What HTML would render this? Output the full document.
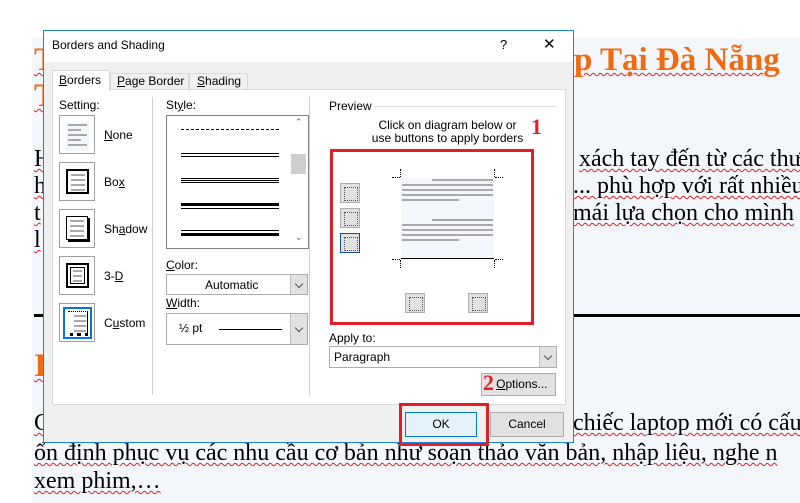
<!DOCTYPE html>
<html><head><meta charset="utf-8"><style>
*{margin:0;padding:0;box-sizing:border-box}
body{width:800px;height:503px;overflow:hidden;background:#fff;position:relative;font-family:"Segoe UI","Liberation Sans","DejaVu Sans",sans-serif}
.a{position:absolute}
.doc{left:32px;top:38px;width:768px;height:465px;background:#f3f6fb}
.t{position:absolute;font-family:"Liberation Serif",serif;font-size:24px;line-height:27px;color:#000;white-space:nowrap;text-decoration:underline wavy #e02020;text-decoration-thickness:1px;text-underline-offset:2px}
.o{color:#f26a10;font-weight:bold;font-size:33px;line-height:36px}
.s{font-size:12px;color:#000;white-space:nowrap}
.box{position:absolute;border:1px solid #a0a0a0;background:#fff}
.lines{position:absolute}
.lines i{display:block;height:2px;background:#a9a9a9;margin-bottom:3px}
.btn{position:absolute;background:#e1e1e1;border:1px solid #adadad;font-size:12px;text-align:center}
.sq{position:absolute;width:20px;height:20px;background:#e1e1e1;border:1px solid #adadad}
.sq:after{content:"";position:absolute;left:3px;top:3px;width:12px;height:12px;border:1px dotted #555}
.dd{position:absolute;right:0;top:0;bottom:0;width:17px;background:#e1e1e1;border-left:1px solid #c0c0c0}
.dd:after{content:"";position:absolute;left:5px;top:50%;margin-top:-4px;width:5px;height:5px;border-right:1px solid #555;border-bottom:1px solid #555;transform:rotate(45deg)}
</style></head><body>
<div class="a doc"></div>
<div class="t o" style="left:34px;top:42px">T</div>
<div class="t o" style="left:574px;top:42px">p Tại Đà Nẵng</div>
<div class="t o" style="left:34px;top:78px">T</div>
<div class="t" style="left:34px;top:146px">H</div>
<div class="t" style="left:34px;top:173px">h</div>
<div class="t" style="left:34px;top:200px">t</div>
<div class="t" style="left:34px;top:227px">l</div>
<div class="t" style="left:579px;top:146px">xách tay đến từ các thư</div>
<div class="t" style="left:573px;top:173px">... phù hợp với rất nhiều</div>
<div class="t" style="left:573px;top:200px">mái lựa chọn cho mình</div>
<div class="a" style="left:34px;top:314px;width:766px;height:3px;background:#000"></div>
<div class="t o" style="left:34px;top:348px">I</div>
<div class="t" style="left:34px;top:410px">C</div>
<div class="t" style="left:573px;top:410px">chiếc laptop mới có cấu</div>
<div class="t" style="left:34px;top:440px">ổn định phục vụ các nhu cầu cơ bản như soạn thảo văn bản, nhập liệu, nghe n</div>
<div class="t" style="left:34px;top:468px">xem phim,…</div>

<!-- dialog -->
<div class="a" style="left:43px;top:30px;width:531px;height:413px;background:#f0f0f0;border:1px solid #1883d7"></div>
<div class="a" style="left:44px;top:31px;width:529px;height:31px;background:#fff"></div>
<div class="a s" style="left:52px;top:38px">Borders and Shading</div>
<div class="a s" style="left:500px;top:37px;font-size:13px">?</div>
<div class="a s" style="left:543px;top:35px;font-size:15px">✕</div>
<div class="a" style="left:52px;top:89px;width:514px;height:316px;background:#fff;border:1px solid #d9d9d9"></div>
<div class="a" style="left:52px;top:70px;width:58px;height:21px;background:#fff;border:1px solid #d9d9d9;border-bottom:none"></div>
<div class="a s" style="left:59px;top:73px"><u>B</u>orders</div>
<div class="a" style="left:110px;top:73px;width:79px;height:17px;border:1px solid #d9d9d9;border-bottom:none"></div>
<div class="a s" style="left:117px;top:74px"><u>P</u>age Border</div>
<div class="a" style="left:189px;top:73px;width:59px;height:17px;border:1px solid #d9d9d9;border-bottom:none"></div>
<div class="a s" style="left:197px;top:74px"><u>S</u>hading</div>

<div class="a s" style="left:59px;top:98px">Setting:</div>
<div class="box" style="left:59px;top:115px;width:36px;height:39px"><div class="lines" style="left:6px;top:6px;width:23px;background:#f3f6fb;padding:2px"><i></i><i style="width:70%"></i><i></i><i style="width:70%"></i><i></i></div></div>
<div class="box" style="left:59px;top:162px;width:36px;height:39px"><div class="a" style="left:6px;top:6px;width:23px;height:25px;border:2px solid #000;padding:3px"><div class="lines" style="left:3px;top:3px;width:14px"><i></i><i></i><i></i><i></i></div></div></div>
<div class="box" style="left:59px;top:209px;width:36px;height:39px"><div class="a" style="left:6px;top:6px;width:22px;height:24px;border:1px solid #000;box-shadow:2px 2px 0 #000"><div class="lines" style="left:3px;top:3px;width:14px"><i></i><i></i><i></i><i></i></div></div></div>
<div class="box" style="left:59px;top:256px;width:36px;height:39px"><div class="a" style="left:6px;top:6px;width:23px;height:25px;border:2px solid #000"><div class="a" style="left:2px;top:2px;width:15px;height:17px;border:1px solid #000"><div class="lines" style="left:2px;top:2px;width:9px"><i></i><i></i><i></i></div></div></div></div>
<div class="box" style="left:59px;top:303px;width:36px;height:39px"><div class="a" style="left:3px;top:3px;width:29px;height:32px;border:2px solid #0a74d7"><div class="a" style="left:3px;top:2px;width:20px;height:22px;border-right:1px solid #000;border-top:1px dotted #000"><div class="lines" style="left:6px;top:3px;width:12px"><i></i><i></i><i></i><i></i></div></div><div class="a" style="left:5px;top:24px;width:18px;height:3px;border-left:3px solid #000;border-right:3px solid #000"><div class="a" style="left:4px;width:4px;height:3px;background:#000"></div></div></div></div>
<div class="a s" style="left:104px;top:128px"><u>N</u>one</div>
<div class="a s" style="left:104px;top:175px">Bo<u>x</u></div>
<div class="a s" style="left:104px;top:222px">Sh<u>a</u>dow</div>
<div class="a s" style="left:104px;top:269px">3-<u>D</u></div>
<div class="a s" style="left:104px;top:316px">C<u>u</u>stom</div>

<div class="a" style="left:152px;top:97px;width:1px;height:298px;background:#d0d0d0"></div>
<div class="a" style="left:309px;top:97px;width:1px;height:298px;background:#d0d0d0"></div>

<div class="a s" style="left:166px;top:98px">St<u>y</u>le:</div>
<div class="box" style="left:166px;top:115px;width:143px;height:134px;border-color:#828282"></div>
<div class="a" style="left:181px;top:129px;width:98px;border-top:1px dashed #000"></div>
<div class="a" style="left:181px;top:153px;width:98px;height:4px;border-top:1px solid #000;border-bottom:1px solid #000"></div>
<div class="a" style="left:181px;top:178px;width:98px;height:5px;border-top:1px solid #000;border-bottom:1px solid #000"><div style="height:1px;margin-top:1px;background:#000"></div></div>
<div class="a" style="left:181px;top:203px;width:98px;height:6px;border-top:3px solid #000;border-bottom:1px solid #000"></div>
<div class="a" style="left:181px;top:230px;width:98px;height:6px;border-top:1px solid #000;border-bottom:3px solid #000"></div>
<div class="a" style="left:291px;top:154px;width:15px;height:20px;background:#cdcdcd"></div>
<div class="a s" style="left:295px;top:117px;font-size:9px;color:#606060">⌃</div>
<div class="a s" style="left:295px;top:232px;font-size:9px;color:#606060">⌄</div>

<div class="a s" style="left:166px;top:258px"><u>C</u>olor:</div>
<div class="box" style="left:166px;top:274px;width:142px;height:21px;border-color:#adadad"><div class="a s" style="left:38px;top:3px">Automatic</div><div class="dd"></div></div>
<div class="a s" style="left:166px;top:296px"><u>W</u>idth:</div>
<div class="box" style="left:166px;top:313px;width:142px;height:32px;border-color:#adadad"><div class="a s" style="left:12px;top:7px">½ pt</div><div class="a" style="left:52px;top:15px;width:63px;height:1px;background:#000"></div><div class="dd"></div></div>

<div class="a s" style="left:329px;top:99px">Preview</div>
<div class="a" style="left:375px;top:106px;width:182px;height:1px;background:#dcdcdc"></div>
<div class="a s" style="left:330px;top:119px;width:235px;text-align:center;line-height:13px">Click on diagram below or<br>use buttons to apply borders</div>
<div class="a" style="left:531px;top:114px;font-family:'Liberation Serif',serif;font-weight:bold;font-size:22px;color:#e0202a">1</div>
<div class="a" style="left:330px;top:149px;width:204px;height:176px;border:3px solid #e31e24"></div>
<div class="sq" style="left:340px;top:183px"></div>
<div class="sq" style="left:340px;top:208px"></div>
<div class="sq" style="left:340px;top:233px;border-color:#1a4f8f"></div>
<div class="a" style="left:401px;top:178px;width:93px;height:81px;background:#f3f6fb;border-bottom:1px solid #000"></div>
<div class="lines" style="left:402px;top:179px;width:91px"><i style="margin-left:30px"></i><i></i><i></i><i></i><i style="width:63%"></i></div>
<div class="lines" style="left:402px;top:219px;width:91px"><i style="margin-left:30px"></i><i></i><i></i><i></i><i style="width:63%"></i></div>
<div class="a" style="left:392px;top:177px;width:8px;border-top:1px dotted #000"></div>
<div class="a" style="left:400px;top:169px;height:8px;border-left:1px dotted #000"></div>
<div class="a" style="left:495px;top:177px;width:8px;border-top:1px dotted #000"></div>
<div class="a" style="left:494px;top:169px;height:8px;border-left:1px dotted #000"></div>
<div class="a" style="left:392px;top:259px;width:8px;border-top:1px dotted #000"></div>
<div class="a" style="left:400px;top:260px;height:8px;border-left:1px dotted #000"></div>
<div class="a" style="left:495px;top:259px;width:8px;border-top:1px dotted #000"></div>
<div class="a" style="left:494px;top:260px;height:8px;border-left:1px dotted #000"></div>
<div class="sq" style="left:405px;top:293px"></div>
<div class="sq" style="left:468px;top:293px"></div>

<div class="a s" style="left:329px;top:331px">Apply to:</div>
<div class="box" style="left:329px;top:346px;width:228px;height:22px;border-color:#adadad"><div class="a s" style="left:4px;top:3px">Paragraph</div><div class="dd"></div></div>
<div class="btn" style="left:481px;top:373px;width:75px;height:23px;line-height:20px">&nbsp;&nbsp;<u>O</u>ptions...</div>
<div class="a" style="left:483px;top:370px;font-family:'Liberation Serif',serif;font-weight:bold;font-size:22px;color:#e0202a">2</div>

<div class="a" style="left:399px;top:403px;width:90px;height:43px;border:3px solid #e31e24"></div>
<div class="btn" style="left:405px;top:412px;width:72px;height:25px;line-height:22px;background:#e5f1fb;border-color:#0078d7">OK</div>
<div class="btn" style="left:490px;top:412px;width:74px;height:25px;line-height:22px">Cancel</div>
</body></html>
